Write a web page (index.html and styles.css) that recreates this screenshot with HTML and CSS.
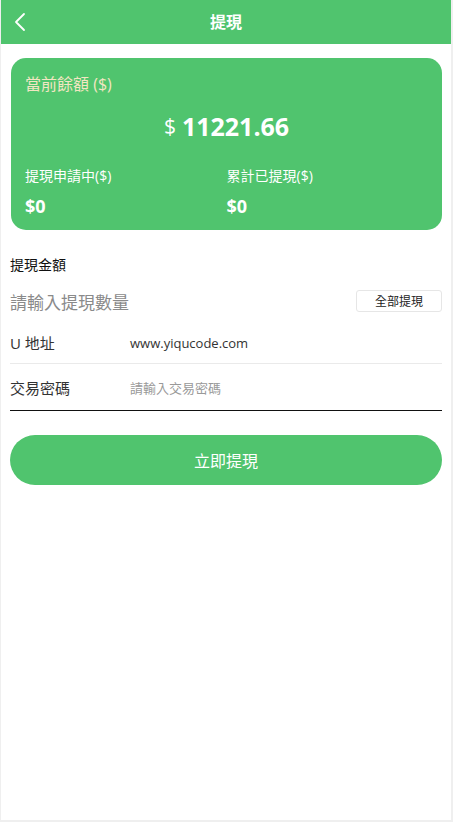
FILE: index.html
```html
<!DOCTYPE html>
<html lang="zh-Hant">
<head>
<meta charset="utf-8">
<title>提現</title>
<link rel="stylesheet" href="styles.css">
</head>
<body>
<div class="app">
  <header class="topbar">
    <a class="back" href="#" aria-label="返回">
      <svg width="14" height="20" viewBox="0 0 14 20"><path d="M11 2 L3 10 L11 18" fill="none" stroke="#fff" stroke-width="1.8" stroke-linecap="round" stroke-linejoin="round"/></svg>
    </a>
    <h1 class="title">提現</h1>
    <span></span>
  </header>

  <section class="card">
    <div class="card-label">當前餘額 ($)</div>
    <div class="balance"><span class="cur">$</span><span class="num">11221.66</span></div>
    <div class="stats">
      <div class="stat">
        <div class="stat-label">提現申請中($)</div>
        <div class="stat-value">$0</div>
      </div>
      <div class="stat">
        <div class="stat-label">累計已提現($)</div>
        <div class="stat-value">$0</div>
      </div>
    </div>
  </section>

  <section class="form">
    <div class="form-title">提現金額</div>
    <div class="amount-row">
      <span class="amount-ph">請輸入提現數量</span>
      <button class="all-btn">全部提現</button>
    </div>
    <div class="field field-divider">
      <span class="field-label">U 地址</span>
      <span class="field-value">www.yiqucode.com</span>
    </div>
    <div class="field field-dark">
      <span class="field-label">交易密碼</span>
      <span class="field-ph">請輸入交易密碼</span>
    </div>
    <button class="submit">立即提現</button>
  </section>
</div>
</body>
</html>
```

FILE: styles.css
```css
* { box-sizing: border-box; }
html, body { margin: 0; padding: 0; }
body {
  background: #efefef;
  font-family: "Open Sans", "Noto Sans CJK TC", sans-serif;
  color: #333;
}
.app {
  margin-left: 1px;
  width: 450px;
  height: 820px;
  background: #fff;
}
.topbar {
  height: 44px;
  background: #50c46e;
  display: grid;
  grid-template-columns: 44px 1fr 44px;
  align-items: center;
}
.back {
  display: flex;
  align-items: center;
  justify-content: flex-start;
  padding-left: 12px;
  height: 44px;
}
.title {
  margin: 0;
  text-align: center;
  color: #fff;
  font-size: 16px;
  font-weight: bold;
  line-height: 44px;
}
.card {
  margin: 14px 9px 0 10px;
  height: 172px;
  background: #50c46e;
  border-radius: 15px;
  padding: 14px 14px 0 14px;
  color: #fff;
}
.card-label {
  font-size: 16px;
  line-height: 24px;
  color: #f2e6c2;
}
.balance {
  margin-top: 12px;
  height: 36px;
  display: flex;
  align-items: center;
  justify-content: center;
  gap: 6px;
}
.cur { font-size: 21px; font-weight: normal; }
.num { font-size: 25px; font-weight: bold; }
.stats {
  display: grid;
  grid-template-columns: 1fr 1fr;
  margin-top: 22px;
}
.stat-label { font-size: 14px; line-height: 20px; }
.stat-value { font-size: 18px; font-weight: bold; line-height: 24px; margin-top: 8px; }

.form { padding: 0 9px; }
.form-title {
  margin-top: 25px;
  font-size: 14px;
  line-height: 20px;
  color: #111;
}
.amount-row {
  margin-top: 10px;
  height: 32px;
  display: flex;
  align-items: center;
  justify-content: space-between;
}
.amount-ph { font-size: 17px; color: #8a8a8a; }
.all-btn {
  width: 86px;
  height: 22px;
  border: 1px solid #e6e6e6;
  border-radius: 3px;
  background: #fff;
  font-family: inherit;
  font-size: 12px;
  color: #222;
  padding: 0;
}
.field {
  display: flex;
  align-items: center;
}
.field-divider {
  margin-top: 5px;
  height: 42px;
  border-bottom: 1px solid #eaeaea;
}
.field-dark {
  height: 47px;
  border-bottom: 1px solid #111;
}
.field-label { width: 120px; font-size: 15px; color: #333; }
.field-value { font-size: 13px; color: #333; }
.field-ph { font-size: 13px; color: #999; }
.submit {
  display: block;
  width: 100%;
  margin-top: 24px;
  height: 50px;
  border: none;
  border-radius: 25px;
  background: #50c46e;
  color: #fff;
  font-family: inherit;
  font-size: 16px;
}
```
